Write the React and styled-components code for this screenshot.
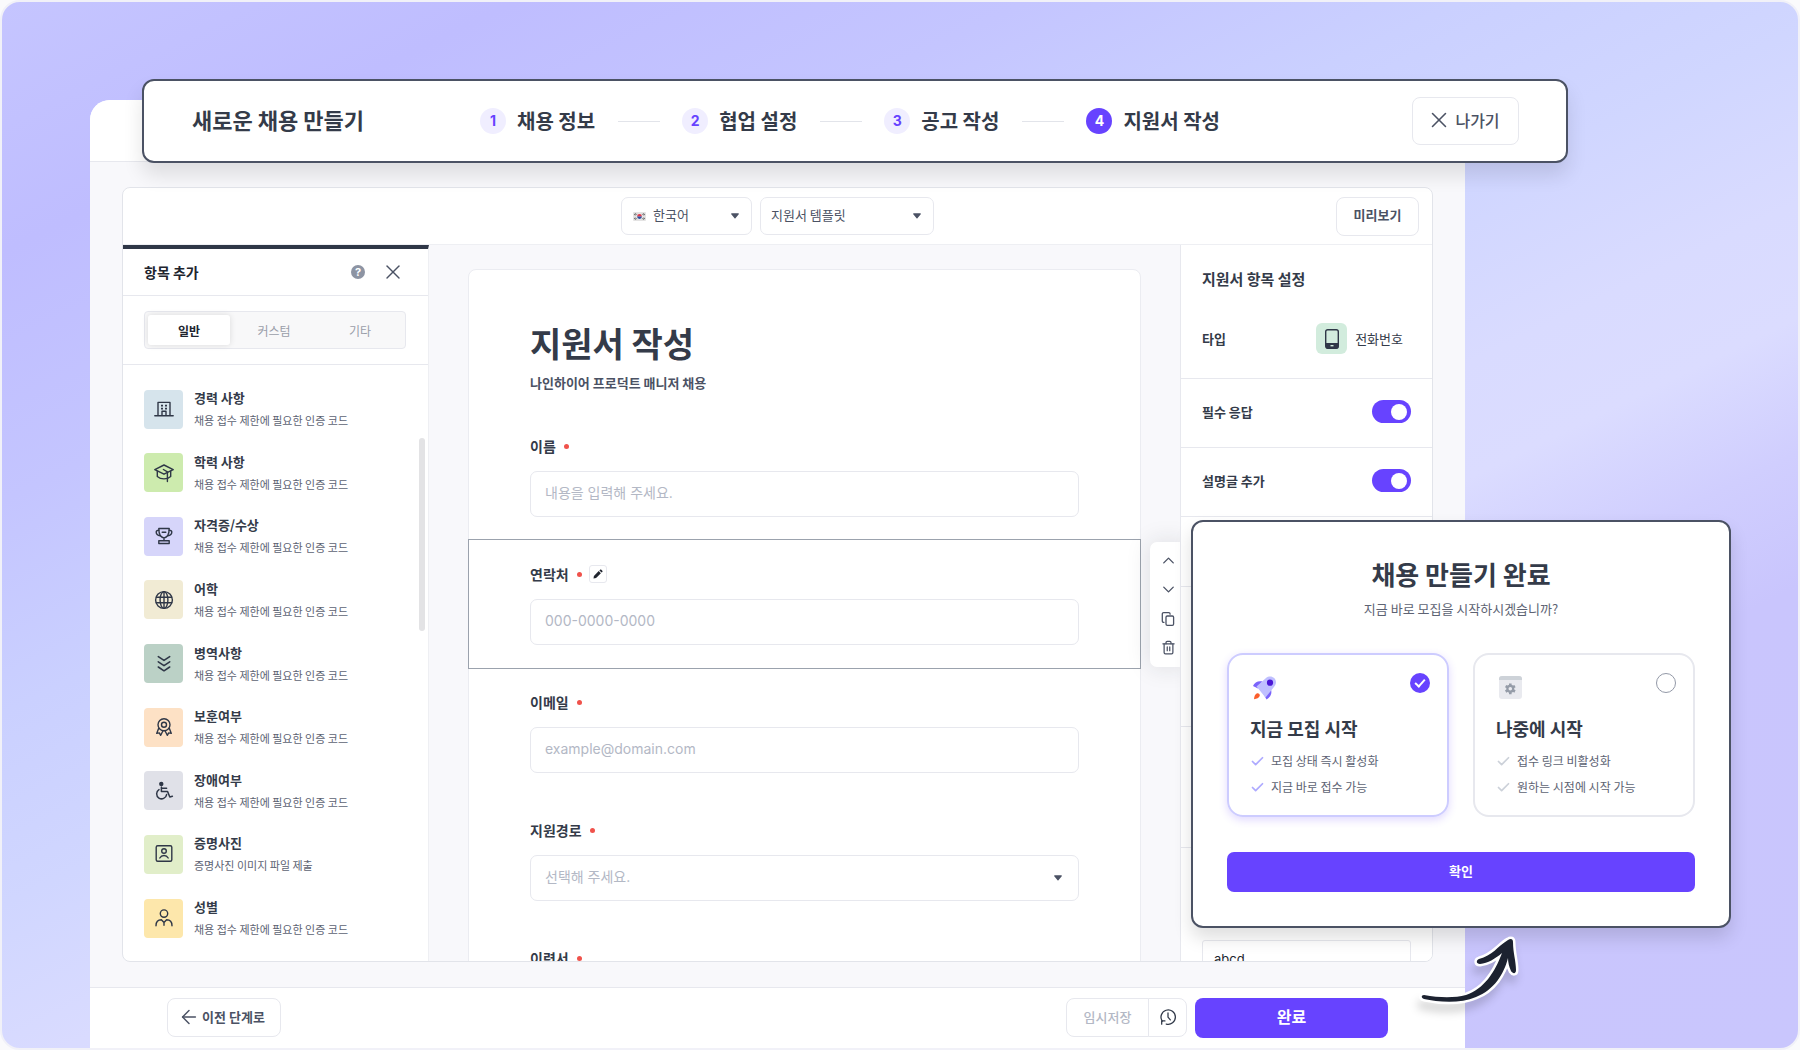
import React, { useState } from 'react';
import styled, { createGlobalStyle, ThemeProvider, css } from 'styled-components';
import { X, ChevronUp, ChevronDown, Trash2, ArrowLeft, Check } from 'lucide-react';

const theme = {
    color: {
        primary: '#6743ff',
        primaryLight: '#f0eeff',
        text: '#343b49',
        grey: '#4b5264',
        greyLight: '#b3b8c5',
        border: '#e7e8ee',
        back: '#f8f8fb',
        red: '#f0524b',
    },
    fontSize: {
        xs: '11px',
        s: '12px',
        m: '13px',
        l: '14px',
        xl: '20px',
    },
    font: '"Noto Sans CJK KR", "Noto Sans", sans-serif',
    fontLatin: 'Inter, "Noto Sans CJK KR", sans-serif',
};

const GlobalStyle = createGlobalStyle`
    * {
        box-sizing: border-box;
    }

    body {
        margin: 0;
        background: #fafafc;
        font-family: ${theme.font};
        color: ${theme.color.text};
    }

    button, input, select {
        font-family: inherit;
        color: inherit;
        margin: 0;
    }

    h1, h2, h3, p, ul, ol {
        margin: 0;
        padding: 0;
        list-style: none;
    }

    svg {
        display: block;
        flex: none;
    }
`;

const Stage = styled.div`
    position: relative;
    display: flex;
    height: 100vh;
    min-height: 960px;
    padding: 98px 333px 0 88px;
    border: 2px solid #f1f1f8;
    border-radius: 20px;
    overflow: hidden;
    background: linear-gradient(
        154deg,
        #c5c5ff 0%,
        #bfbdff 13%,
        #c4c5ff 26%,
        #cad0ff 37%,
        #d0d6ff 47%,
        #d9dbff 56%,
        #dbdcff 62%,
        #d0cefe 69%,
        #c9c5fd 76%,
        #c9c6fd 100%
    );
`;

const Button = styled.button`
    display: flex;
    align-items: center;
    justify-content: center;
    height: 39px;
    padding: 0 16px 2px;
    border: 1px solid ${theme.color.border};
    border-radius: 8px;
    background: #fff;
    color: ${theme.color.grey};
    font-size: ${theme.fontSize.m};
    font-weight: 500;
    white-space: nowrap;
    cursor: pointer;
`;

const PrimaryButton = styled(Button)`
    height: 40px;
    padding-bottom: 4px;
    border: 0;
    background: ${theme.color.primary};
    color: #fff;
    font-weight: 700;
`;

const IconButton = styled.button`
    display: flex;
    align-items: center;
    padding: 0;
    border: 0;
    background: none;
    color: ${theme.color.grey};
    cursor: pointer;
`;

/* floating step header */

const StepBar = styled.header`
    position: absolute;
    z-index: 2;
    top: 77px;
    left: 140px;
    right: 230px;
    display: flex;
    align-items: center;
    height: 84px;
    padding: 0 47px 0 48px;
    border: 2px solid ${theme.color.grey};
    border-radius: 12px;
    background: #fff;
    box-shadow: 0 12px 20px rgba(0, 0, 0, 0.11);
`;

const StepBarTitle = styled.h1`
    flex: 0 0 288px;
    padding-bottom: 5px;
    font-size: 22px;
    font-weight: 700;
    line-height: 32px;
`;

const Steps = styled.ol`
    display: flex;
    flex: 1;
    gap: 22px;
`;

const Step = styled.li`
    display: flex;
    align-items: center;
    font-size: ${theme.fontSize.xl};
    font-weight: 700;
    line-height: 28px;
    white-space: nowrap;

    &:not(:last-child)::after {
        content: '';
        width: 42px;
        height: 1px;
        margin-left: 23px;
        background: #e2e4ea;
    }
`;

const StepNumber = styled.span`
    width: 26px;
    height: 26px;
    margin-right: 11px;
    border-radius: 50%;
    background: ${props => (props.$active ? theme.color.primary : theme.color.primaryLight)};
    color: ${props => (props.$active ? '#fff' : theme.color.primary)};
    font-family: ${theme.fontLatin};
    font-size: ${theme.fontSize.l};
    font-weight: 700;
    line-height: 26px;
    text-align: center;
`;

const ExitButton = styled(Button)`
    gap: 3px;
    width: 107px;
    height: 48px;
    padding: 0 18px 2px 13px;
    font-size: 16px;
`;

/* editor window */

const Window = styled.div`
    display: flex;
    flex: 1;
    flex-direction: column;
    min-width: 0;
    border-radius: 20px 0 0 0;
    background: ${theme.color.back};
    overflow: hidden;
`;

const WindowTop = styled.div`
    flex: 0 0 62px;
    border-bottom: 1px solid ${theme.color.border};
    background: #fff;
`;

const WindowBody = styled.main`
    display: flex;
    flex: 1;
    min-height: 0;
    padding: 25px 32px;
`;

const Workspace = styled.div`
    display: flex;
    flex: 1;
    flex-direction: column;
    min-width: 0;
    border: 1px solid #e2e4ea;
    border-radius: 8px;
    background: #fff;
    overflow: hidden;
`;

const Toolbar = styled.div`
    display: grid;
    grid-template-columns: 1fr auto 1fr;
    flex: 0 0 57px;
    align-items: center;
    padding: 0 13px;
    border-bottom: 1px solid #eeeff3;
`;

const ToolbarCenter = styled.div`
    display: flex;
    gap: 8px;
`;

const PreviewButton = styled(Button)`
    justify-self: end;
    width: 83px;
    padding-bottom: 4px;
    font-weight: 700;
`;

const SelectBox = styled.div`
    position: relative;
    width: ${props => props.$width || '100%'};
`;

const Select = styled.select`
    appearance: none;
    display: block;
    width: 100%;
    height: 38px;
    padding: 0 30px 3px ${props => (props.$flag ? '31px' : '10px')};
    border: 1px solid ${theme.color.border};
    border-radius: 7px;
    background: #fff;
    color: ${theme.color.grey};
    font-size: ${theme.fontSize.m};
`;

const CaretIcon = styled.svg`
    position: absolute;
    top: calc(50% - 3px);
    right: ${props => (props.$wide ? '17px' : '13px')};
    width: 8px;
    height: 6px;
    fill: ${theme.color.grey};
    pointer-events: none;
`;

const FlagIcon = styled.svg`
    position: absolute;
    top: calc(50% - 4px);
    left: 12px;
    width: 13px;
    height: 9px;
`;

const Panels = styled.div`
    display: flex;
    flex: 1;
    min-height: 0;
`;

/* left panel */

const ItemPanel = styled.aside`
    position: relative;
    display: flex;
    flex: 0 0 306px;
    flex-direction: column;
    border-top: 4px solid #2f3747;
    border-right: 1px solid #eeeff3;
`;

const ItemPanelHead = styled.div`
    display: flex;
    flex: 0 0 47px;
    align-items: center;
    gap: 16px;
    padding: 0 23px 0 21px;
    border-bottom: 1px solid ${theme.color.border};
`;

const ItemPanelTitle = styled.h2`
    flex: 1;
    font-size: ${theme.fontSize.l};
    font-weight: 700;
    line-height: 20px;
    color: #20242e;
`;

const HelpBadge = styled.button`
    width: 14px;
    height: 14px;
    padding: 0;
    border: 0;
    border-radius: 50%;
    background: #8d94a3;
    color: #fff;
    font-family: ${theme.fontLatin};
    font-size: ${theme.fontSize.xs};
    font-weight: 700;
    line-height: 14px;
`;

const TabsSection = styled.div`
    padding: 15px 22px 15px 21px;
    border-bottom: 1px solid ${theme.color.border};
`;

const Tabs = styled.div`
    display: grid;
    grid-template-columns: 82px 1fr 1fr;
    gap: 2px;
    height: 38px;
    padding: 3px;
    border: 1px solid ${theme.color.border};
    border-radius: 4px;
    background: #f8f8f9;
`;

const Tab = styled.button`
    padding: 0;
    border: 0;
    border-radius: 3px;
    background: none;
    color: #9a9ea9;
    font-size: ${theme.fontSize.s};
    cursor: pointer;

    ${props => props.$active && css`
        background: #fff;
        box-shadow: 0 0 6px rgba(0, 0, 0, 0.12);
        color: #20242e;
        font-weight: 700;
    `}
`;

const ItemList = styled.ul`
    display: flex;
    flex: 1;
    flex-direction: column;
    justify-content: space-between;
    padding: 23px 21px 22px;
`;

const Item = styled.li`
    display: flex;
    align-items: center;
    gap: 11px;
`;

const ItemTile = styled.span`
    display: flex;
    align-items: center;
    justify-content: center;
    width: 39px;
    height: 39px;
    border-radius: 4px;
    background: ${props => props.$color};
`;

const ItemTitle = styled.h3`
    margin-bottom: 2px;
    font-size: ${theme.fontSize.m};
    font-weight: 700;
    line-height: 20px;
`;

const ItemDescription = styled.p`
    color: #5d6373;
    font-size: ${theme.fontSize.xs};
    line-height: 20px;
`;

const ScrollThumb = styled.div`
    position: absolute;
    top: 189px;
    right: 3px;
    width: 6px;
    height: 193px;
    border-radius: 3px;
    background: #e3e3e5;
`;

/* form canvas */

const Canvas = styled.section`
    flex: 1;
    min-width: 0;
    padding: 24px 39px 0;
    background: ${theme.color.back};
    overflow: hidden;
`;

const FormCard = styled.form`
    border: 1px solid #ebecf1;
    border-radius: 8px 8px 0 0;
    background: #fff;
`;

const FormHead = styled.div`
    padding: 49px 61px 19px;
`;

const FormTitle = styled.h2`
    margin-bottom: 6px;
    font-size: 34px;
    font-weight: 700;
    line-height: 48px;
`;

const FormSubtitle = styled.p`
    font-size: ${theme.fontSize.m};
    font-weight: 700;
    line-height: 20px;
    color: ${theme.color.grey};
`;

const Field = styled.div`
    position: relative;
    height: 128px;
    padding: 24px 61px;
    box-shadow: ${props => (props.$selected ? '0 0 0 1px #9ba2ad' : 'none')};
`;

const FieldHead = styled.div`
    display: flex;
    align-items: center;
    height: 20px;
    margin-bottom: 15px;
`;

const FieldLabel = styled.label`
    display: flex;
    align-items: center;
    gap: 8px;
    font-size: ${theme.fontSize.l};
    font-weight: 700;
    line-height: 20px;

    &::after {
        content: '';
        width: 5px;
        height: 5px;
        border-radius: 50%;
        background: ${theme.color.red};
    }
`;

const EditButton = styled(IconButton)`
    justify-content: center;
    width: 18px;
    height: 18px;
    margin-left: 7px;
    border: 1px solid ${theme.color.border};
    border-radius: 3px;
    color: #20242e;
`;

const controlStyle = css`
    display: block;
    width: 100%;
    height: 46px;
    padding: 0 14px 3px;
    border: 1px solid ${theme.color.border};
    border-radius: 7px;
    background: #fff;
    font-family: ${theme.fontLatin};
    font-size: ${theme.fontSize.l};
`;

const Input = styled.input`
    ${controlStyle}

    &::placeholder {
        color: ${theme.color.greyLight};
        opacity: 1;
    }
`;

const FieldSelect = styled.select`
    ${controlStyle}
    appearance: none;
    color: ${theme.color.greyLight};
`;

const FieldTools = styled.div`
    position: absolute;
    top: 2px;
    left: calc(100% + 10px);
    width: 36px;
    height: 125px;
    padding-top: 4px;
    border-radius: 7px;
    background: #fff;
    box-shadow: 0 0 24px rgba(30, 35, 50, 0.13);

    button {
        justify-content: center;
        width: 100%;
        height: 29px;
    }
`;

/* right panel */

const SettingPanel = styled.aside`
    position: relative;
    flex: 0 0 252px;
    border-left: 1px solid ${theme.color.border};
    background: #fff;
    overflow: hidden;
`;

const SettingHead = styled.div`
    padding: 23px 21px 24px;
    border-bottom: 1px solid ${theme.color.border};
`;

const SettingTitle = styled.h2`
    margin-bottom: 33px;
    font-size: 15px;
    font-weight: 700;
    line-height: 22px;
`;

const SettingType = styled.div`
    display: flex;
    align-items: center;
    justify-content: space-between;
    padding-right: 8px;
    font-size: ${theme.fontSize.m};
    font-weight: 700;
`;

const TypeValue = styled.span`
    display: flex;
    align-items: center;
    gap: 8px;
    font-weight: 400;
`;

const TypeTile = styled.span`
    display: flex;
    align-items: center;
    justify-content: center;
    width: 31px;
    height: 31px;
    border-radius: 6px;
    background: #d2ecdd;
`;

const SettingRow = styled.label`
    display: flex;
    align-items: center;
    justify-content: space-between;
    height: 69px;
    padding: 0 21px 3px;
    border-bottom: 1px solid ${theme.color.border};
    font-size: ${theme.fontSize.m};
    font-weight: 700;
`;

const SettingBlock = styled.div`
    height: ${props => props.$height};
    border-bottom: 1px solid ${theme.color.border};
`;

const SettingFoot = styled.div`
    padding: 92px 21px 0;
`;

const SettingInput = styled.input`
    width: 100%;
    height: 38px;
    padding: 0 11px;
    border: 1px solid ${theme.color.border};
    border-radius: 3px;
    color: #20242e;
    font-family: ${theme.fontLatin};
    font-size: ${theme.fontSize.m};
`;

const Toggle = styled.input`
    appearance: none;
    display: flex;
    align-items: center;
    width: 39px;
    height: 23px;
    padding: 0 4px;
    border-radius: 12px;
    background: #d5d8e0;
    cursor: pointer;

    &::before {
        content: '';
        width: 16px;
        height: 16px;
        border-radius: 50%;
        background: #fff;
    }

    &:checked {
        justify-content: flex-end;
        background: ${theme.color.primary};
    }
`;

/* footer */

const WindowFooter = styled.footer`
    display: flex;
    flex: 0 0 61px;
    align-items: center;
    justify-content: space-between;
    padding: 0 77px 1px;
    border-top: 1px solid ${theme.color.border};
    background: #fff;
`;

const BackButton = styled(Button)`
    gap: 2px;
    width: 114px;
    padding: 0 15px 2px 10px;
    font-weight: 700;
`;

const FooterActions = styled.div`
    display: flex;
`;

const DraftButton = styled(Button)`
    width: 83px;
    border-radius: 8px 0 0 8px;
    color: ${theme.color.greyLight};
`;

const HistoryButton = styled(Button)`
    width: 39px;
    margin: 0 8px 0 -1px;
    padding: 0;
    border-radius: 0 8px 8px 0;
`;

const DoneButton = styled(PrimaryButton)`
    width: 193px;
    font-size: 16px;
`;

/* dialog */

const Dialog = styled.div`
    position: absolute;
    z-index: 3;
    top: 518px;
    right: 67px;
    width: 540px;
    padding: 34px;
    border: 2px solid ${theme.color.grey};
    border-radius: 12px;
    background: #fff;
    box-shadow: 0 10px 18px rgba(0, 0, 0, 0.13);
`;

const DialogTitle = styled.h2`
    margin-bottom: 7px;
    font-size: 26px;
    font-weight: 700;
    line-height: 36px;
    text-align: center;
`;

const DialogText = styled.p`
    margin-bottom: 34px;
    color: #5d6373;
    font-size: ${theme.fontSize.m};
    line-height: 20px;
    text-align: center;
`;

const Options = styled.div`
    display: grid;
    grid-template-columns: 1fr 1fr;
    gap: 24px;
    margin-bottom: 35px;
`;

const Option = styled.label`
    display: block;
    padding: 18px 17px 18px 21px;
    border: 2px solid ${props => (props.$checked ? '#cdccff' : theme.color.border)};
    border-radius: 16px;
    box-shadow: ${props => (props.$checked ? '0 3px 8px rgba(103, 67, 255, 0.2)' : 'none')};
    cursor: pointer;
`;

const OptionHead = styled.span`
    display: flex;
    align-items: flex-start;
    justify-content: space-between;
    margin-bottom: 14px;
`;

const OptionRadio = styled.input`
    appearance: none;
    width: 20px;
    height: 20px;
    margin: 0;
    border: 1px solid #9399a7;
    border-radius: 50%;

    &:checked {
        display: flex;
        justify-content: center;
        padding-top: 4px;
        border: 0;
        background: ${theme.color.primary};
    }

    &:checked::before {
        content: '';
        box-sizing: border-box;
        width: 6px;
        height: 10px;
        border: solid #fff;
        border-width: 0 2px 2px 0;
        transform: rotate(42deg);
    }
`;

const OptionTitle = styled.span`
    display: block;
    margin-bottom: 10px;
    font-size: 18px;
    font-weight: 700;
    line-height: 26px;
`;

const OptionLine = styled.span`
    display: flex;
    align-items: center;
    gap: 6px;
    color: #5d6373;
    font-size: ${theme.fontSize.s};
    line-height: 20px;

    & + & {
        margin-top: 6px;
    }

    svg {
        color: ${props => (props.$checked ? '#aeaaff' : '#ccd1d9')};
    }
`;

const ConfirmButton = styled(PrimaryButton)`
    width: 100%;
    border-radius: 7px;
`;

const ArrowDrawing = styled.svg`
    position: absolute;
    z-index: 4;
    right: 268px;
    bottom: 32px;
    width: 120px;
    height: 90px;
    overflow: visible;
    filter: drop-shadow(-2px 8px 4px rgba(0, 0, 0, 0.16));
`;

const LineIcon = ({ children, size = 20 }) => (
    <svg
        width={size}
        height={size}
        viewBox="0 0 20 20"
        fill="none"
        stroke="#2f3747"
        strokeWidth="1.4"
        strokeLinecap="round"
        strokeLinejoin="round"
    >
        {children}
    </svg>
);

const Caret = ({ wide }) => (
    <CaretIcon viewBox="0 0 9 6" $wide={wide}>
        <path d="M.8 0h7.4c.6 0 .9.6.5 1.1L5 5.6c-.3.4-.7.4-1 0L.3 1.1C-.1.6.2 0 .8 0z" />
    </CaretIcon>
);

const Flag = () => (
    <FlagIcon viewBox="0 0 13 9">
        <rect width="13" height="9" rx="1" fill="#e4e3e3" />
        <path d="M4.100 4.500a2.400 2.400 0 0 1 4.800 0z" fill="#e0394a" />
        <path d="M4.100 4.500a2.400 2.400 0 0 0 4.800 0z" fill="#2b4fa0" />
        <path
            d="M1.300 2.800l1.200-1.500M2.300 3.400l1.200-1.500M1.300 6.200l1.200 1.500M2.300 5.600l1.200 1.500M10.500 1.300l1.200 1.500M9.500 1.900l1.200 1.500M10.500 7.700l1.200-1.500M9.500 7.100l1.200-1.500"
            stroke="#333"
            strokeWidth=".8"
        />
    </FlagIcon>
);

const HistoryIcon = () => (
    <LineIcon size={18}>
        <path d="M3.6 14.600A8 8 0 1 1 8 17.800" />
        <path d="M3 18v-3.600h3.600" />
        <path d="M10 5.500v4.700l2.600 3" />
    </LineIcon>
);

const CopyIcon = () => (
    <svg width="14" height="14" viewBox="0 0 14 14" fill="none" stroke="currentColor" strokeWidth="1.3" strokeLinejoin="round">
        <rect x="5" y="4" width="7.600" height="9.300" rx="1.300" />
        <path d="M3 10.300H2.600a1.300 1.300 0 0 1-1.300-1.300V2A1.300 1.300 0 0 1 2.600.700h5.200A1.300 1.300 0 0 1 9.100 2v.200" strokeLinecap="round" />
    </svg>
);

const PencilIcon = () => (
    <svg width="10" height="10" viewBox="0 0 10 10" fill="currentColor">
        <path d="M.5 9.500l.4-2.600 4.800-4.800 2.200 2.200-4.800 4.800z" />
        <path d="M6.400 1.400l.7-.7c.4-.4.9-.4 1.200 0l1 1c.4.3.4.8 0 1.200l-.7.7z" />
    </svg>
);

const PhoneIcon = () => (
    <svg width="14" height="20" viewBox="0 0 14 20">
        <rect x="0.7" y="0.7" width="12.6" height="18.6" rx="2" fill="none" stroke="#2f3747" strokeWidth="1.4" />
        <path d="M1 14h12v4.500a1 1 0 0 1-1 1H2a1 1 0 0 1-1-1z" fill="#2f3747" />
        <rect x="5.500" y="16" width="3" height="1.4" fill="#d2ecdd" />
    </svg>
);

const RocketIcon = () => (
    <svg width="28" height="28" viewBox="0 -1 28 28">
        <path d="M3 12C4.500 8 8.500 6.500 12.500 7.500L8 14.500z" fill="#7a63fb" />
        <path d="M21 15.500c1.200 4-.5 8-4.500 10l-3-5.500z" fill="#7a63fb" />
        <path d="M6.500 12.500L16 4C18.500 2 22 2 24.200 4.100c2.300 2.200 2.300 5.800.3 8.200L15.500 23.500z" fill="#bfbfff" />
        <circle cx="20" cy="8.700" r="3.100" fill="#4b17d6" />
        <path d="M4 25.200c.2-2.900 1-5 3-5.900 1.700-.4 3.200 1 2.700 2.800-.8 2-2.900 2.800-5.700 3.100z" fill="#fb5e2c" />
    </svg>
);

const SettingsIcon = () => (
    <svg width="28" height="28" viewBox="0 0 28 28">
        <rect x="3" y="3" width="23" height="23" rx="3" fill="#e9eaef" />
        <path d="M3 7V6a3 3 0 0 1 3-3h17a3 3 0 0 1 3 3v1z" fill="#cdd2d8" />
        <circle cx="14.300" cy="15.800" r="2.900" fill="none" stroke="#959ca8" strokeWidth="2.200" />
        <path
            d="M14.300 10.400v2.200M14.300 19v2.200M9.600 13.100l2 1.100M17 17.400l2 1.100M9.600 18.500l2-1.100M17 14.200l2-1.100"
            stroke="#959ca8"
            strokeWidth="2.600"
        />
    </svg>
);

const needed = '채용 접수 제한에 필요한 인증 코드';

const items = [
    {
        name: '경력 사항',
        content: needed,
        color: '#d6e4ec',
        icon: (
            <>
                <path d="M.8 16.800h18.400M4 16.800V3.400h12v13.400M8 16.800v-4.500h4v4.500" />
                <path d="M7 6.600h2M11 6.600h2M7 9.600h2M11 9.600h2" strokeWidth="1.800" strokeLinecap="butt" />
            </>
        ),
    },
    {
        name: '학력 사항',
        content: needed,
        color: '#cdebae',
        icon: (
            <>
                <path d="M.8 6.600L10 2l9.200 4.600L10 11.200z" />
                <path d="M3.300 8.200v5.300c3.600 3.200 9.800 3.200 13.400 0V8.200" />
                <path d="M9.400 6.500l4 2.300v9.700" />
            </>
        ),
    },
    {
        name: '자격증/수상',
        content: needed,
        color: '#d6d5fa',
        icon: (
            <>
                <path d="M4.800 2.500h10.400c0 5-1.700 8.800-5.200 9.400-3.500-.6-5.200-4.400-5.200-9.400zM10 12v2.600M4.800 14.800h10.400v2.700H4.800z" />
                <path d="M4.800 4.200c-1.600 0-2.600.5-2.600 1.800 0 2 1.600 3.400 4 3.800M15.200 4.200c1.600 0 2.600.5 2.600 1.800 0 2-1.600 3.400-4 3.800M8.200 6.200h3.600" />
            </>
        ),
    },
    {
        name: '어학',
        content: needed,
        color: '#f1ebd4',
        icon: (
            <>
                <circle cx="10" cy="10" r="8.400" />
                <ellipse cx="10" cy="10" rx="3.900" ry="8.400" />
                <path d="M10 1.600v16.800M2.300 7.200h15.400M2.300 12.800h15.400" />
            </>
        ),
    },
    {
        name: '병역사항',
        content: needed,
        color: '#bbd1c6',
        icon: <path d="M4.300 2.600L10 6.400l5.700-3.800M4.300 7.800L10 11.600l5.700-3.800M4.300 13L10 16.800l5.700-3.800" strokeWidth="1.600" />,
    },
    {
        name: '보훈여부',
        content: needed,
        color: '#fde1c5',
        icon: (
            <>
                <circle cx="10" cy="7.800" r="6" />
                <circle cx="10" cy="7.800" r="2.500" />
                <path d="M4.700 11.200l-2 5.200 2.600-.5 1.400 2.400 2.300-4.600M15.300 11.200l2 5.200-2.600-.5-1.400 2.400-2.300-4.600" />
            </>
        ),
    },
    {
        name: '장애여부',
        content: needed,
        color: '#e0e1e8',
        icon: (
            <>
                <circle cx="7.300" cy="2.900" r="1.500" fill="#2f3747" />
                <path d="M7.400 6v4.600h6.200l2.200 5.400 2.600-.8M7.400 7.300h5.200" strokeWidth="1.500" />
                <path d="M5 8.600a5 5 0 1 0 7.600 5" strokeWidth="1.500" />
            </>
        ),
    },
    {
        name: '증명사진',
        content: '증명사진 이미지 파일 제출',
        color: '#e1eec9',
        icon: (
            <>
                <rect x="2.200" y="1.800" width="15.600" height="15.400" rx="1.500" />
                <circle cx="10" cy="7" r="2.300" />
                <path d="M5.800 14c1-1.800 2.400-2.500 4.200-2.500s3.200.7 4.200 2.500" />
            </>
        ),
    },
    {
        name: '성별',
        content: needed,
        color: '#fde7ab',
        icon: (
            <>
                <circle cx="10" cy="5.600" r="3.700" />
                <path d="M2 17.700c0-3.600 1.800-6 5.400-6L10 14.400l2.600-2.700c3.600 0 5.400 2.400 5.400 6M10 14.400v2.800" />
            </>
        ),
    },
];

const tabs = ['일반', '커스텀', '기타'];

const steps = ['채용 정보', '협업 설정', '공고 작성', '지원서 작성'];

const options = [
    {
        id: 'now',
        title: '지금 모집 시작',
        icon: <RocketIcon />,
        lines: ['모집 상태 즉시 활성화', '지금 바로 접수 가능'],
    },
    {
        id: 'later',
        title: '나중에 시작',
        icon: <SettingsIcon />,
        lines: ['접수 링크 비활성화', '원하는 시점에 시작 가능'],
    },
];

const FormField = ({ id, label, selected, children }) => (
    <Field $selected={selected}>
        <FieldHead>
            <FieldLabel htmlFor={id}>{label}</FieldLabel>
            {
                selected &&
                <EditButton type="button" aria-label="edit">
                    <PencilIcon />
                </EditButton>
            }
        </FieldHead>
        {children}
        {
            selected &&
            <FieldTools>
                <IconButton type="button" aria-label="up"><ChevronUp size={19} strokeWidth={1.7} /></IconButton>
                <IconButton type="button" aria-label="down"><ChevronDown size={19} strokeWidth={1.7} /></IconButton>
                <IconButton type="button" aria-label="copy"><CopyIcon /></IconButton>
                <IconButton type="button" aria-label="delete"><Trash2 size={15} /></IconButton>
            </FieldTools>
        }
    </Field>
);

const LeftPanel = () => {
    const [tab, setTab] = useState(tabs[0]);

    return (
        <ItemPanel>
            <ItemPanelHead>
                <ItemPanelTitle>항목 추가</ItemPanelTitle>
                <HelpBadge type="button">?</HelpBadge>
                <IconButton type="button" aria-label="close">
                    <X size={24} strokeWidth={1.4} />
                </IconButton>
            </ItemPanelHead>
            <TabsSection>
                <Tabs>
                    {tabs.map(name => (
                        <Tab key={name} type="button" $active={name === tab} onClick={() => setTab(name)}>
                            {name}
                        </Tab>
                    ))}
                </Tabs>
            </TabsSection>
            <ItemList>
                {items.map(item => (
                    <Item key={item.name}>
                        <ItemTile $color={item.color}>
                            <LineIcon>{item.icon}</LineIcon>
                        </ItemTile>
                        <div>
                            <ItemTitle>{item.name}</ItemTitle>
                            <ItemDescription>{item.content}</ItemDescription>
                        </div>
                    </Item>
                ))}
            </ItemList>
            <ScrollThumb />
        </ItemPanel>
    );
};

const RightPanel = () => (
    <SettingPanel>
        <SettingHead>
            <SettingTitle>지원서 항목 설정</SettingTitle>
            <SettingType>
                타입
                <TypeValue>
                    <TypeTile><PhoneIcon /></TypeTile>
                    전화번호
                </TypeValue>
            </SettingType>
        </SettingHead>
        <SettingRow>
            필수 응답
            <Toggle type="checkbox" defaultChecked />
        </SettingRow>
        <SettingRow>
            설명글 추가
            <Toggle type="checkbox" defaultChecked />
        </SettingRow>
        <SettingBlock $height="70px" />
        <SettingBlock $height="140px" />
        <SettingBlock $height="121px" />
        <SettingFoot>
            <SettingInput defaultValue="abcd" aria-label="option" />
        </SettingFoot>
    </SettingPanel>
);

const FinishDialog = () => {
    const [selected, setSelected] = useState('now');

    return (
        <Dialog role="dialog" aria-labelledby="finish-title">
            <DialogTitle id="finish-title">채용 만들기 완료</DialogTitle>
            <DialogText>지금 바로 모집을 시작하시겠습니까?</DialogText>
            <Options>
                {options.map(option => {
                    const checked = option.id === selected;

                    return (
                        <Option key={option.id} $checked={checked}>
                            <OptionHead>
                                {option.icon}
                                <OptionRadio
                                    type="radio"
                                    name="start"
                                    checked={checked}
                                    onChange={() => setSelected(option.id)}
                                />
                            </OptionHead>
                            <OptionTitle>{option.title}</OptionTitle>
                            {option.lines.map(line => (
                                <OptionLine key={line} $checked={checked}>
                                    <Check size={15} strokeWidth={2.8} />
                                    {line}
                                </OptionLine>
                            ))}
                        </Option>
                    );
                })}
            </Options>
            <ConfirmButton type="button">확인</ConfirmButton>
        </Dialog>
    );
};

const App = () => (
    <ThemeProvider theme={theme}>
        <GlobalStyle />
        <Stage>
            <StepBar>
                <StepBarTitle>새로운 채용 만들기</StepBarTitle>
                <Steps>
                    {steps.map((name, index) => (
                        <Step key={name}>
                            <StepNumber $active={index === steps.length - 1}>{index + 1}</StepNumber>
                            {name}
                        </Step>
                    ))}
                </Steps>
                <ExitButton type="button">
                    <X size={26} strokeWidth={1.4} />
                    나가기
                </ExitButton>
            </StepBar>

            <Window>
                <WindowTop />
                <WindowBody>
                    <Workspace>
                        <Toolbar>
                            <span />
                            <ToolbarCenter>
                                <SelectBox $width="131px">
                                    <Select $flag aria-label="language" defaultValue="한국어">
                                        <option>한국어</option>
                                    </Select>
                                    <Flag />
                                    <Caret />
                                </SelectBox>
                                <SelectBox $width="174px">
                                    <Select aria-label="template" defaultValue="지원서 템플릿">
                                        <option>지원서 템플릿</option>
                                    </Select>
                                    <Caret />
                                </SelectBox>
                            </ToolbarCenter>
                            <PreviewButton type="button">미리보기</PreviewButton>
                        </Toolbar>
                        <Panels>
                            <LeftPanel />
                            <Canvas>
                                <FormCard>
                                    <FormHead>
                                        <FormTitle>지원서 작성</FormTitle>
                                        <FormSubtitle>나인하이어 프로덕트 매니저 채용</FormSubtitle>
                                    </FormHead>
                                    <FormField id="name" label="이름">
                                        <Input id="name" placeholder="내용을 입력해 주세요." />
                                    </FormField>
                                    <FormField id="phone" label="연락처" selected>
                                        <Input id="phone" type="tel" placeholder="000-0000-0000" />
                                    </FormField>
                                    <FormField id="email" label="이메일">
                                        <Input id="email" type="email" placeholder="example@domain.com" />
                                    </FormField>
                                    <FormField id="route" label="지원경로">
                                        <SelectBox>
                                            <FieldSelect id="route" defaultValue="">
                                                <option value="">선택해 주세요.</option>
                                            </FieldSelect>
                                            <Caret wide />
                                        </SelectBox>
                                    </FormField>
                                    <FormField id="resume" label="이력서">
                                        <Input id="resume" />
                                    </FormField>
                                </FormCard>
                            </Canvas>
                            <RightPanel />
                        </Panels>
                    </Workspace>
                </WindowBody>
                <WindowFooter>
                    <BackButton type="button">
                        <ArrowLeft size={22} strokeWidth={1.6} />
                        이전 단계로
                    </BackButton>
                    <FooterActions>
                        <DraftButton type="button">임시저장</DraftButton>
                        <HistoryButton type="button" aria-label="history">
                            <HistoryIcon />
                        </HistoryButton>
                        <DoneButton type="button">완료</DoneButton>
                    </FooterActions>
                </WindowFooter>
            </Window>

            <FinishDialog />
            <ArrowDrawing viewBox="0 0 120 90">
                <path
                    d="M14 69C30 72 45 72 56 69C74 63 85 46 92 27C85 33 78 37 70 38C66 38 66 34 69 33C82 30 88 20 98 14C101 12 103 13 103 16C103 27 106 35 106 44C106 48 103 48 101 45C99 41 98 36 98 32C94 48 84 64 66 71C50 78 28 76 14 73C11 72 11 69 14 69Z"
                    fill="#1c2230"
                    stroke="#fff"
                    strokeWidth="5"
                    strokeLinejoin="round"
                    paintOrder="stroke"
                />
            </ArrowDrawing>
        </Stage>
    </ThemeProvider>
);

export default App;
